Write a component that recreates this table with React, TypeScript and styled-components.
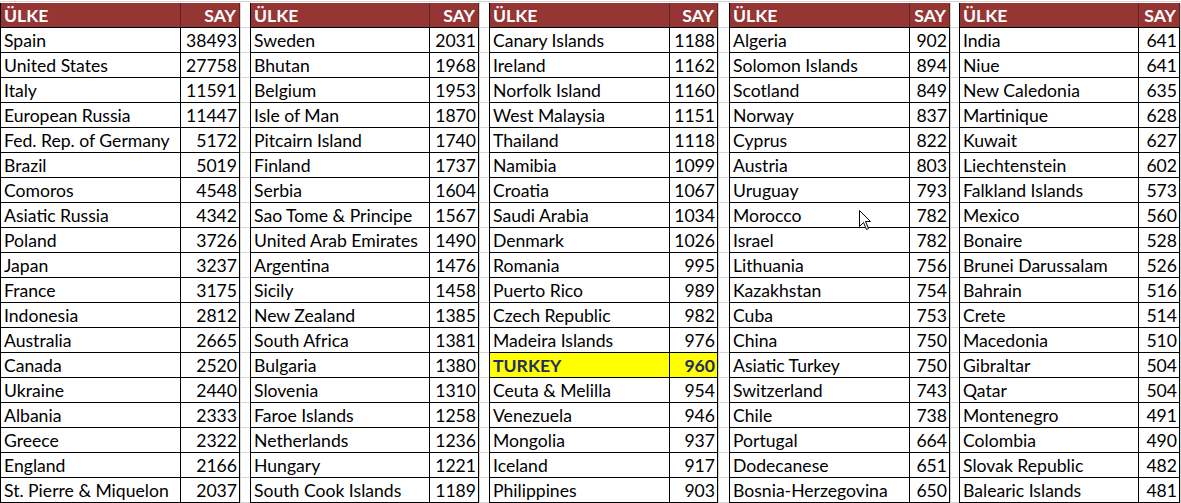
import React from "react";
import styled, {createGlobalStyle} from "styled-components";

type Row = [string, number];

interface ITable {
    nameWidth: number;
    numWidth: number;
    rows: Row[];
}

const GlobalStyle = createGlobalStyle`
    html, body {
        margin: 0;
        padding: 0;
        background: #FFFFFF;
    }

    body {
        font-family: Lato, "Liberation Sans", sans-serif;
    }
`;

const Sheet = styled.div`
    display: flex;
    align-items: flex-start;
    width: 1181px;
    height: 503px;
    overflow: hidden;
    margin-top: 1px;
    border-top: 1px solid #D4D4D4;
    box-sizing: border-box;
`;

const Table = styled.div`
    display: grid;
    grid-template-columns: ${({$name, $num}: {$name: number; $num: number}) => `${$name}px ${$num}px`};
    grid-auto-rows: 25px;
    margin-top: 1px;
    border-left: 1px solid #000000;
`;

const HeadCell = styled.div`
    box-sizing: border-box;
    padding: 0 3px;
    background: #963634;
    color: #FFFFFF;
    font-weight: 700;
    font-size: 17.6px;
    line-height: 25px;
    text-align: ${({$right}: {$right?: boolean}) => $right ? "right" : "left"};
    border-right: 1px solid #5E2221;
    border-bottom: 1px solid #000000;
    white-space: nowrap;
    overflow: hidden;
`;

const Cell = styled.div`
    box-sizing: border-box;
    padding: 0 2px 0 3px;
    font-size: 17.6px;
    line-height: 26px;
    color: ${({$hot}: {$hot?: boolean; $right?: boolean}) => $hot ? "#1F2F5C" : "#000000"};
    font-weight: ${({$hot}) => $hot ? 700 : 400};
    background: ${({$hot}) => $hot ? "#FFFF00" : "transparent"};
    text-align: ${({$right}) => $right ? "right" : "left"};
    border-right: 1px solid #000000;
    border-bottom: 1px solid #000000;
    white-space: nowrap;
    overflow: hidden;
`;

const Gap = styled.div`
    display: flex;
    flex-direction: column;
    flex: 0 0 ${({$width}: {$width: number}) => $width}px;
    margin-top: 1px;
    border-left: 1px solid #D4D4D4;
    box-sizing: border-box;
`;

const GapCell = styled.div`
    height: 25px;
    box-sizing: border-box;
    border-bottom: 1px solid #D4D4D4;
`;

const Pointer = styled.svg`
    position: absolute;
    left: 859px;
    top: 210px;
    pointer-events: none;
`;

const tables: ITable[] = [
    {
        nameWidth: 180, numWidth: 59, rows: [
            ["Spain", 38493], ["United States", 27758], ["Italy", 11591], ["European Russia", 11447],
            ["Fed. Rep. of Germany", 5172], ["Brazil", 5019], ["Comoros", 4548], ["Asiatic Russia", 4342],
            ["Poland", 3726], ["Japan", 3237], ["France", 3175], ["Indonesia", 2812], ["Australia", 2665],
            ["Canada", 2520], ["Ukraine", 2440], ["Albania", 2333], ["Greece", 2322], ["England", 2166],
            ["St. Pierre & Miquelon", 2037]
        ]
    },
    {
        nameWidth: 179, numWidth: 49, rows: [
            ["Sweden", 2031], ["Bhutan", 1968], ["Belgium", 1953], ["Isle of Man", 1870],
            ["Pitcairn Island", 1740], ["Finland", 1737], ["Serbia", 1604], ["Sao Tome & Principe", 1567],
            ["United Arab Emirates", 1490], ["Argentina", 1476], ["Sicily", 1458], ["New Zealand", 1385],
            ["South Africa", 1381], ["Bulgaria", 1380], ["Slovenia", 1310], ["Faroe Islands", 1258],
            ["Netherlands", 1236], ["Hungary", 1221], ["South Cook Islands", 1189]
        ]
    },
    {
        nameWidth: 180, numWidth: 48, rows: [
            ["Canary Islands", 1188], ["Ireland", 1162], ["Norfolk Island", 1160], ["West Malaysia", 1151],
            ["Thailand", 1118], ["Namibia", 1099], ["Croatia", 1067], ["Saudi Arabia", 1034],
            ["Denmark", 1026], ["Romania", 995], ["Puerto Rico", 989], ["Czech Republic", 982],
            ["Madeira Islands", 976], ["TURKEY", 960], ["Ceuta & Melilla", 954], ["Venezuela", 946],
            ["Mongolia", 937], ["Iceland", 917], ["Philippines", 903]
        ]
    },
    {
        nameWidth: 180, numWidth: 40, rows: [
            ["Algeria", 902], ["Solomon Islands", 894], ["Scotland", 849], ["Norway", 837], ["Cyprus", 822],
            ["Austria", 803], ["Uruguay", 793], ["Morocco", 782], ["Israel", 782], ["Lithuania", 756],
            ["Kazakhstan", 754], ["Cuba", 753], ["China", 750], ["Asiatic Turkey", 750], ["Switzerland", 743],
            ["Chile", 738], ["Portugal", 664], ["Dodecanese", 651], ["Bosnia-Herzegovina", 650]
        ]
    },
    {
        nameWidth: 179, numWidth: 41, rows: [
            ["India", 641], ["Niue", 641], ["New Caledonia", 635], ["Martinique", 628], ["Kuwait", 627],
            ["Liechtenstein", 602], ["Falkland Islands", 573], ["Mexico", 560], ["Bonaire", 528],
            ["Brunei Darussalam", 526], ["Bahrain", 516], ["Crete", 514], ["Macedonia", 510],
            ["Gibraltar", 504], ["Qatar", 504], ["Montenegro", 491], ["Colombia", 490],
            ["Slovak Republic", 482], ["Balearic Islands", 481]
        ]
    }
];

// gap widths between the tables (excel spacer columns)
const gaps = [10, 10, 11, 9, 1];

function CountryTable({nameWidth, numWidth, rows}: ITable) {
    return (
        <Table $name={nameWidth} $num={numWidth}>
            <HeadCell>ÜLKE</HeadCell>
            <HeadCell $right>SAY</HeadCell>
            {
                rows.map(([name, count]) => {
                    const hot = name === "TURKEY";
                    return (
                        <React.Fragment key={name}>
                            <Cell $hot={hot}>{name}</Cell>
                            <Cell $hot={hot} $right>{count}</Cell>
                        </React.Fragment>
                    );
                })
            }
        </Table>
    );
}

function Spacer({width}: {width: number}) {
    return (
        <Gap $width={width}>
            {Array.from({length: 20}, (_, i) => <GapCell key={i} />)}
        </Gap>
    );
}

export default function App() {
    return (
        <>
            <GlobalStyle />
            <Sheet>
                {
                    tables.map((t, i) => (
                        <React.Fragment key={i}>
                            <CountryTable {...t} />
                            <Spacer width={gaps[i]} />
                        </React.Fragment>
                    ))
                }
            </Sheet>
            <Pointer width="13" height="21" viewBox="0 0 13 21">
                <path d="M0.5 0.5 L0.5 16.5 L4.5 12.5 L7.5 19.5 L9.5 18.5 L6.5 11.5 L11.5 11.5 Z"
                      fill="#FFFFFF" stroke="#000000" strokeWidth="1" strokeLinejoin="miter" />
            </Pointer>
        </>
    );
}
